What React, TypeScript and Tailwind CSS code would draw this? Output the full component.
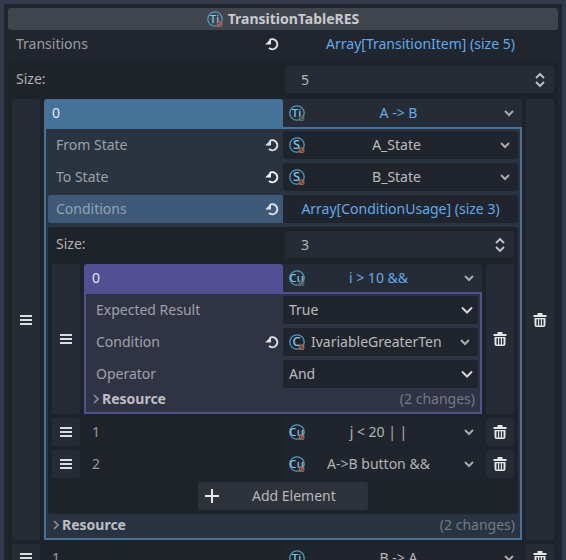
import React from "react";

const Reset = ({ bright = false }: { bright?: boolean }) => {
  const c = bright ? "#f4f5f6" : "#dfe1e4";
  return (
    <svg width="14" height="14" viewBox="0 0 14 14" fill="none" className="shrink-0">
      <path d="M4.6 3 A5 5 0 1 1 4 11" stroke={c} strokeWidth="2" fill="none" />
      <path d="M0.2 7.4 L6 7.4 L6 1.6 Z" fill={c} />
    </svg>
  );
};

const Chevron = ({ bright = false }: { bright?: boolean }) => (
  <svg width="12" height="8" viewBox="0 0 12 8" fill="none" className="shrink-0">
    {bright ? (
      <path d="M1 1.5 L6 6.5 L11 1.5" stroke="#d3d4d6" strokeWidth="2" />
    ) : (
      <path d="M2 2 L6 6 L10 2" stroke="#a9abae" strokeWidth="2" />
    )}
  </svg>
);

const Burger = () => (
  <svg width="12" height="10" viewBox="0 0 12 10">
    <rect x="0" y="0" width="12" height="2" fill="#dcdddf" />
    <rect x="0" y="4" width="12" height="2" fill="#dcdddf" />
    <rect x="0" y="8" width="12" height="2" fill="#dcdddf" />
  </svg>
);

const Trash = () => (
  <svg width="14" height="14" viewBox="0 0 14 14">
    <rect x="4.5" y="0" width="5" height="2" fill="#e4e5e7" />
    <rect x="0.5" y="2" width="13" height="2" rx="0.5" fill="#e4e5e7" />
    <path d="M1.5 5 H12.5 V12 Q12.5 14 10.5 14 H3.5 Q1.5 14 1.5 12 Z M3.5 6.2 V12.5 H5 V6.2 Z M6.2 6.2 V12.5 H7.8 V6.2 Z M9 6.2 V12.5 H10.5 V6.2 Z" fill="#e4e5e7" fillRule="evenodd" />
  </svg>
);

const ResIcon = ({ t, dim = false }: { t: string; dim?: boolean }) => (
  <svg width="17" height="17" viewBox="0 0 17 17" className="shrink-0 overflow-visible">
    <circle cx="8" cy="8" r="7.2" fill="none" stroke="#4a9cc4" strokeWidth="1.3" />
    <text x="7.6" y="12.4" textAnchor="middle" fontSize={t.length > 1 ? 11.5 : 13} fontWeight="500" fontFamily="'Noto Sans', sans-serif" fill="#7cc8ec">{t}</text>
    <circle cx="12.6" cy="13.2" r="2.3" fill="none" stroke={dim ? "#6d6258" : "#d05a32"} strokeWidth="1.2" />
  </svg>
);

const Label = ({ children }: { children: React.ReactNode }) => (
  <span className="text-[14px] text-[#ffffff8c]">{children}</span>
);

function Dropdown({ icon, text }: { icon: string; text: string }) {
  return (
    <div className="flex items-center h-full w-[235px] bg-[#20252d] rounded-[3px] pl-[6px] pr-[7px]">
      <ResIcon t={icon} />
      <span className="flex-1 whitespace-nowrap text-center pr-[12px] text-[14px] text-[#ffffffb0]">{text}</span>
      <Chevron />
    </div>
  );
}

function InnerDropdown({ icon, text }: { icon?: string; text: string }) {
  const plain = !icon;
  return (
    <div className={`flex items-center h-full w-[195px] bg-[#20252d] rounded-[3px] pl-[6px] ${plain ? "pr-[5px]" : "pr-[7px]"}`}>
      {icon && <ResIcon t={icon} />}
      <span className={`flex-1 whitespace-nowrap text-left ${icon ? "pl-[5px]" : ""} text-[14px] text-[#ffffffb0]`}>{text}</span>
      <Chevron bright={plain} />
    </div>
  );
}

function PropRow({ label, reset, brightReset, children }: { label: string; reset?: boolean; brightReset?: boolean; children: React.ReactNode }) {
  return (
    <div className="flex h-[28px]">
      <div className="flex-1 min-w-0 flex items-center pl-[8px] pr-[4px] justify-between">
        <Label>{label}</Label>
        {reset && <Reset bright={brightReset} />}
      </div>
      {children}
    </div>
  );
}

function SideButton({ children, tall = false }: { children: React.ReactNode; tall?: boolean }) {
  return (
    <div className={`w-[28px] shrink-0 rounded-[3px] bg-[#262c36] flex items-center justify-center ${tall ? "self-stretch" : "h-[28px]"}`}>
      {children}
    </div>
  );
}

function Spin({ value, w }: { value: string; w: string }) {
  return (
    <div className={`${w} h-[27px] bg-[#262c36] rounded-[3px] flex items-center justify-between pl-[16px] pr-[8px]`}>
      <span className="text-[14px] text-[#ffffffa8]">{value}</span>
      <svg width="12" height="16" viewBox="0 0 12 16" fill="none">
        <path d="M2 6 L6 2 L10 6 M2 10 L6 14 L10 10" stroke="#c4c6c9" strokeWidth="1.8" />
      </svg>
    </div>
  );
}

function CollapsedRow({ index, icon, text, half }: { index: string; icon: string; text: string; half: string }) {
  return (
    <div className="flex gap-[4px] h-[28px]">
      <SideButton><Burger /></SideButton>
      <div className="flex">
        <div className={`${half} flex items-center pl-[8px] text-[14px] text-[#ffffff8c]`}>{index}</div>
        <div className={`${half} h-full bg-[#20252d] rounded-[3px] flex items-center pl-[6px] pr-[7px]`}>
          <ResIcon t={icon} />
          <span className="flex-1 text-center pr-[12px] text-[14px] whitespace-nowrap text-[#ffffffa8]">{text}</span>
          <Chevron />
        </div>
      </div>
      <SideButton><Trash /></SideButton>
    </div>
  );
}

function ResourceRow() {
  return (
    <div className="flex items-center h-[24px] pb-[2px] pl-[5px] pr-[3px] justify-between">
      <div className="flex items-center gap-[3px]">
        <svg width="6" height="10" viewBox="0 0 6 10" fill="none">
          <path d="M1 1 L5 5 L1 9" stroke="#8b8f95" strokeWidth="1.6" />
        </svg>
        <span className="text-[14px] font-bold text-[#ffffffb0]">Resource</span>
      </div>
      <span className="text-[14px] text-[#ffffff59]">(2 changes)</span>
    </div>
  );
}

function ItemHeader({ half, bg, line, icon, text }: { half: string; bg: string; line: string; icon: string; text: string }) {
  return (
    <div className="flex h-[30px]">
      <div className={`${half} ${bg} rounded-t-[3px] pl-[8px] pb-[2px] flex items-center text-[14px] text-[#ffffffe0]`}>0</div>
      <div className={`${half} bg-[#262c36] rounded-tr-[3px] border-b-2 ${line} flex items-center pl-[6px] pr-[7px]`}>
        <ResIcon t={icon} dim />
        <span className="flex-1 text-center pr-[12px] text-[14px] text-[#62aaea] whitespace-nowrap">{text}</span>
        <Chevron />
      </div>
    </div>
  );
}

export default function App() {
  return (
    <div className="w-[566px] h-[560px] overflow-hidden bg-[#333b4a] pt-[4px] px-[4px] leading-5 font-['Noto_Sans',sans-serif]">
      <div className="h-[600px] bg-[#21262e] pt-[4px] px-[4px]">
        <div className="h-[22px] bg-[#3f444d] rounded-[3px] flex items-center justify-center gap-[4px]">
          <ResIcon t="Ti" />
          <span className="text-[14px] font-bold text-[#ffffffb8]">TransitionTableRES</span>
        </div>

        <div className="flex h-[28px] items-center">
          <div className="w-[271px] flex items-center justify-between pl-[8px]">
            <Label>Transitions</Label>
            <Reset />
          </div>
          <div className="flex-1 pl-[4px] text-center text-[14px] text-[#62aaea]">Array[TransitionItem] (size 5)</div>
        </div>

        <div className="mt-[4px] bg-[#1e2229] rounded-[3px] pt-[4px] px-[4px] h-[600px]">
          <div className="flex h-[27px] items-center">
            <div className="w-[273px] pl-[4px] pb-[2px] text-[14px] text-[#ffffffa8]">Size:</div>
            <Spin value="5" w="w-[269px]" />
          </div>

          <div className="flex gap-[4px] mt-[6px]">
            <SideButton tall><Burger /></SideButton>
            <div className="w-[478px] shrink-0">
              <ItemHeader half="w-[239px]" bg="bg-[#457299]" line="border-[#457299]" icon="Ti" text="A -> B" />
              <div className="border-2 border-t-0 border-[#457299] bg-[#2a3441] pt-[2px] px-[2px]">
                <div className="flex flex-col gap-[4px]">
                  <PropRow label="From State" reset>
                    <Dropdown icon="S" text="A_State" />
                  </PropRow>
                  <PropRow label="To State" reset brightReset>
                    <Dropdown icon="S" text="B_State" />
                  </PropRow>
                  <div className="flex h-[28px]">
                    <div className="w-[235px] flex items-center justify-between pl-[8px] pr-[4px] bg-[#3e5a78] rounded-l-[3px]">
                      <span className="text-[14px] text-[#ffffff70]">Conditions</span>
                      <Reset />
                    </div>
                    <div className="w-[235px] bg-[#20252d] rounded-r-[3px] flex items-center justify-center text-[14px] text-[#62aaea]">Array[ConditionUsage] (size 3)</div>
                  </div>
                </div>

                <div className="mt-[4px] bg-[#1e2229] rounded-[3px] pt-[4px] px-[4px] h-[287px]">
                  <div className="flex h-[27px] items-center">
                    <div className="w-[233px] pl-[4px] pb-[2px] text-[14px] text-[#ffffffa8]">Size:</div>
                    <Spin value="3" w="w-[229px]" />
                  </div>

                  <div className="mt-[6px] flex flex-col gap-[4px]">
                    <div className="flex gap-[4px]">
                      <SideButton tall><Burger /></SideButton>
                      <div className="w-[398px] shrink-0">
                        <ItemHeader half="w-[199px]" bg="bg-[#534f93]" line="border-[#534f93]" icon="Cu" text="i > 10 &&" />
                        <div className="border-2 border-t-0 border-[#534f93] bg-[#2f3344] pt-[2px] px-[2px]">
                          <div className="flex flex-col gap-[4px]">
                            <PropRow label="Expected Result">
                              <InnerDropdown text="True" />
                            </PropRow>
                            <PropRow label="Condition" reset>
                              <InnerDropdown icon="C" text="IvariableGreaterTen" />
                            </PropRow>
                            <PropRow label="Operator">
                              <InnerDropdown text="And" />
                            </PropRow>
                          </div>
                          <ResourceRow />
                        </div>
                      </div>
                      <SideButton tall><Trash /></SideButton>
                    </div>
                    <CollapsedRow half="w-[199px]" index="1" icon="Cu" text="j < 20 | |" />
                    <CollapsedRow half="w-[199px]" index="2" icon="Cu" text="A->B button &&" />
                    <div className="flex justify-center">
                      <div className="w-[170px] h-[28px] bg-[#2d323b] rounded-[3px] flex items-center pl-[7px] text-[14px] text-[#ffffffa8]">
                        <svg width="14" height="14" viewBox="0 0 14 14" className="shrink-0">
                          <path d="M6 0 H8 V6 H14 V8 H8 V14 H6 V8 H0 V6 H6 Z" fill="#e6e7e9" />
                        </svg>
                        <span className="ml-[33px]">Add Element</span>
                      </div>
                    </div>
                  </div>
                </div>
                <ResourceRow />
              </div>
            </div>
            <SideButton tall><Trash /></SideButton>
          </div>

          <div className="mt-[4px]">
            <CollapsedRow half="w-[239px]" index="1" icon="Ti" text="B -> A" />
          </div>
        </div>
      </div>
    </div>
  );
}
